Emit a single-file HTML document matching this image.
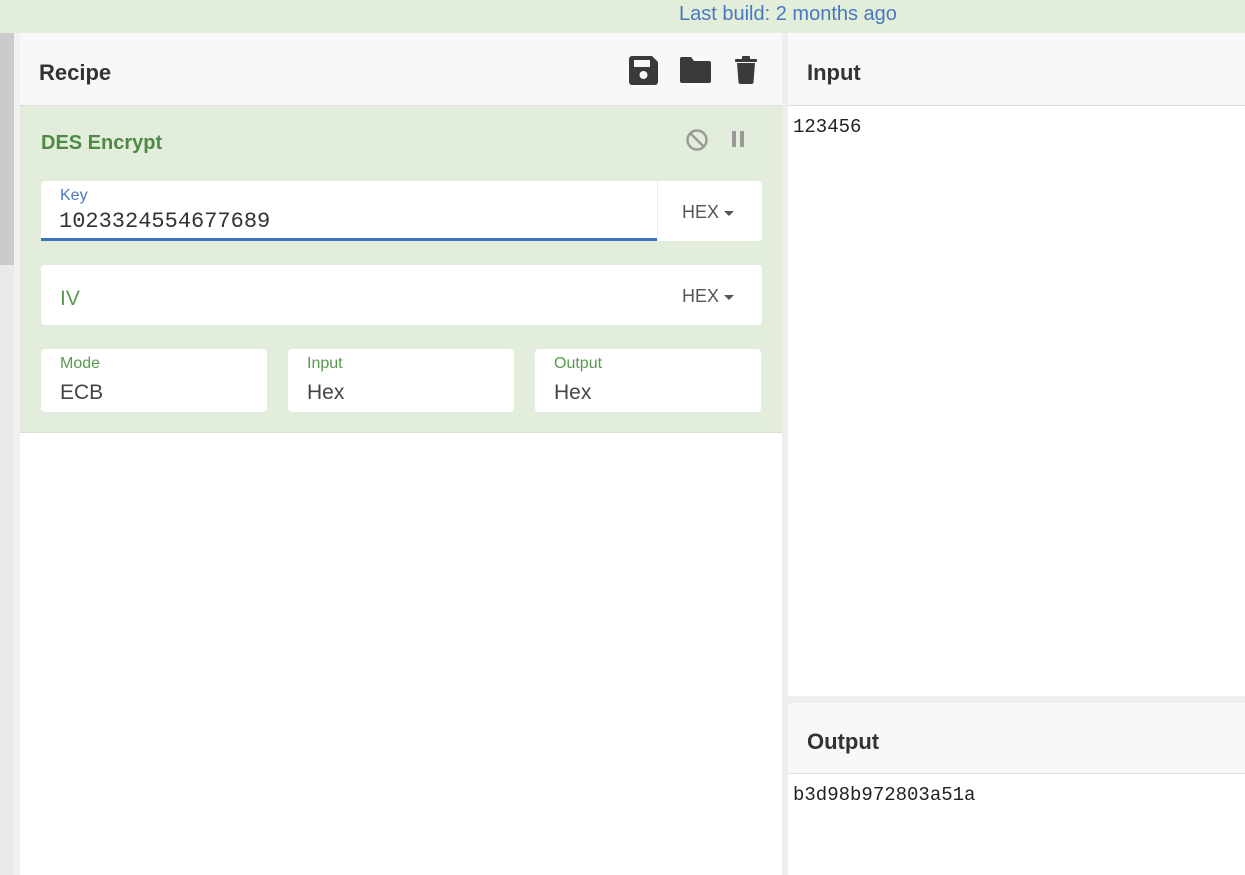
<!DOCTYPE html>
<html><head><style>
*{box-sizing:border-box;margin:0;padding:0}
body{width:1245px;height:875px;overflow:hidden;background:#fff;font-family:"Liberation Sans",sans-serif;position:relative}
.abs{position:absolute}
.top{left:0;top:0;width:1245px;height:33px;background:#e2eed9}
.build{left:679px;top:3px;font-size:20px;color:#4a78c0}
.hdr{background:#f8f8f8;border-bottom:1px solid #ddd}
.ht{font-size:22px;font-weight:bold;color:#333}
.fld{background:#fff;border-radius:4px}
.lbl{font-size:16px;color:#5a9a50}
.val{font-size:21px;color:#444}
.mono{font-family:"Liberation Mono",monospace}
.hex{font-size:18px;color:#555}
.hex:after{content:"";display:inline-block;margin-left:5px;vertical-align:middle;border-left:5px solid transparent;border-right:5px solid transparent;border-top:5px solid #555}
</style></head><body>
<div class="abs top"></div>
<div class="abs build">Last build: 2 months ago</div>
<div class="abs" style="left:0;top:33px;width:14px;height:842px;background:#eaeaea"></div>
<div class="abs" style="left:0;top:33px;width:14px;height:232px;background:#cbcbcb"></div>
<div class="abs" style="left:14px;top:33px;width:6px;height:842px;background:#f1f1f1"></div>
<div class="abs hdr" style="left:20px;top:33px;width:762px;height:73px"></div>
<div class="abs ht" style="left:39px;top:60px">Recipe</div>
<svg class="abs" style="left:629px;top:56px" width="30" height="29" viewBox="0 0 30 29"><path d="M3 0h20l6 6v20a3 3 0 0 1-3 3H3a3 3 0 0 1-3-3V3a3 3 0 0 1 3-3z" fill="#3a3a3a"/><rect x="5" y="4" width="16" height="7" fill="#f8f8f8"/><circle cx="14.5" cy="19" r="4" fill="#f8f8f8"/></svg>
<svg class="abs" style="left:680px;top:57px" width="31" height="26" viewBox="0 0 31 26"><path d="M2 0h9l3 4h15a2 2 0 0 1 2 2v18a2 2 0 0 1-2 2H2a2 2 0 0 1-2-2V2a2 2 0 0 1 2-2z" fill="#3a3a3a"/></svg>
<svg class="abs" style="left:735px;top:56px" width="22" height="28" viewBox="0 0 22 28"><rect x="0" y="3" width="22" height="3" rx="1" fill="#3a3a3a"/><rect x="7" y="0" width="8" height="4" rx="1" fill="#3a3a3a"/><path d="M2 7h18l-1.5 19a2 2 0 0 1-2 2h-11a2 2 0 0 1-2-2z" fill="#3a3a3a"/></svg>
<div class="abs" style="left:20px;top:106px;width:762px;height:327px;background:#e2eedb;border-bottom:1px solid #d5e3cc"></div>
<div class="abs" style="left:41px;top:132px;font-size:20px;font-weight:bold;color:#4f8a45">DES Encrypt</div>
<svg class="abs" style="left:685px;top:128px" width="24" height="24" viewBox="0 0 24 24"><circle cx="12" cy="12" r="9.5" fill="none" stroke="#999" stroke-width="2.4"/><line x1="5.5" y1="5.5" x2="18.5" y2="18.5" stroke="#999" stroke-width="2.4"/></svg>
<div class="abs" style="left:732px;top:131px;width:4px;height:16px;background:#999"></div>
<div class="abs" style="left:740px;top:131px;width:4px;height:16px;background:#999"></div>
<div class="abs fld" style="left:41px;top:181px;width:721px;height:60px"></div>
<div class="abs" style="left:41px;top:238px;width:616px;height:3px;background:#3c73c2"></div>
<div class="abs" style="left:657px;top:181px;width:1px;height:60px;background:#eee"></div>
<div class="abs" style="left:60px;top:187px;font-size:16px;color:#4a78c0">Key</div>
<div class="abs mono" style="left:59px;top:209px;font-size:22px;color:#333">1023324554677689</div>
<div class="abs hex" style="left:682px;top:202px">HEX</div>
<div class="abs fld" style="left:41px;top:265px;width:721px;height:60px"></div>
<div class="abs" style="left:60px;top:287px;font-size:21px;color:#5a9a50">IV</div>
<div class="abs hex" style="left:682px;top:286px">HEX</div>
<div class="abs fld" style="left:41px;top:349px;width:226px;height:63px"></div>
<div class="abs lbl" style="left:60px;top:355px">Mode</div>
<div class="abs val" style="left:60px;top:381px">ECB</div>
<div class="abs fld" style="left:288px;top:349px;width:226px;height:63px"></div>
<div class="abs lbl" style="left:307px;top:355px">Input</div>
<div class="abs val" style="left:307px;top:381px">Hex</div>
<div class="abs fld" style="left:535px;top:349px;width:226px;height:63px"></div>
<div class="abs lbl" style="left:554px;top:355px">Output</div>
<div class="abs val" style="left:554px;top:381px">Hex</div>
<div class="abs" style="left:782px;top:33px;width:6px;height:842px;background:#eeeeee"></div>
<div class="abs hdr" style="left:788px;top:33px;width:457px;height:73px"></div>
<div class="abs ht" style="left:807px;top:60px">Input</div>
<div class="abs mono" style="left:793px;top:116px;font-size:19px;color:#222">123456</div>
<div class="abs" style="left:788px;top:696px;width:457px;height:7px;background:#eeeeee"></div>
<div class="abs hdr" style="left:788px;top:703px;width:457px;height:71px"></div>
<div class="abs ht" style="left:807px;top:729px">Output</div>
<div class="abs mono" style="left:793px;top:784px;font-size:19px;color:#222">b3d98b972803a51a</div>
</body></html>
